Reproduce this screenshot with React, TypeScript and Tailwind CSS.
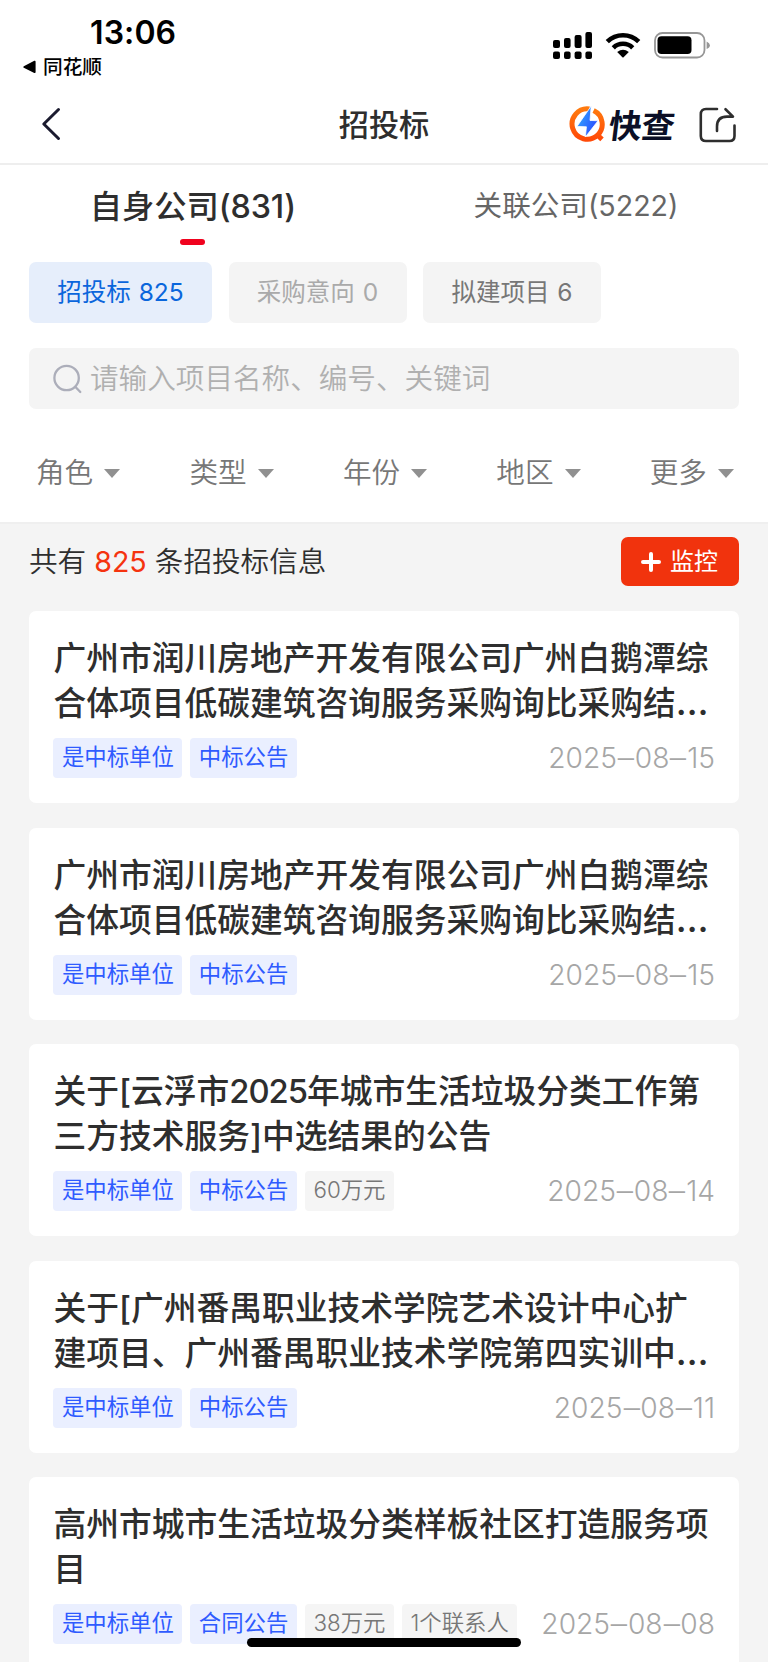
import React from "react";

type Tag = { text: string; tone: "blue" | "gray" };
type Bid = { lines: string[]; tags: Tag[]; date: string };

const win: Tag = { text: "是中标单位", tone: "blue" };
const notice: Tag = { text: "中标公告", tone: "blue" };

const bids: Bid[] = [
  {
    lines: ["广州市润川房地产开发有限公司广州白鹅潭综", "合体项目低碳建筑咨询服务采购询比采购结…"],
    tags: [win, notice],
    date: "2025-08-15",
  },
  {
    lines: ["广州市润川房地产开发有限公司广州白鹅潭综", "合体项目低碳建筑咨询服务采购询比采购结…"],
    tags: [win, notice],
    date: "2025-08-15",
  },
  {
    lines: ["关于[云浮市2025年城市生活垃圾分类工作第", "三方技术服务]中选结果的公告"],
    tags: [win, notice, { text: "60万元", tone: "gray" }],
    date: "2025-08-14",
  },
  {
    lines: ["关于[广州番禺职业技术学院艺术设计中心扩", "建项目、广州番禺职业技术学院第四实训中…"],
    tags: [win, notice],
    date: "2025-08-11",
  },
  {
    lines: ["高州市城市生活垃圾分类样板社区打造服务项", "目"],
    tags: [
      win,
      { text: "合同公告", tone: "blue" },
      { text: "38万元", tone: "gray" },
      { text: "1个联系人", tone: "gray" },
    ],
    date: "2025-08-08",
  },
];

const filters = ["角色", "类型", "年份", "地区", "更多"];

function StatusBar() {
  return (
    <div className="flex h-[84px] justify-between text-black">
      <div className="pt-[14px]">
        <div className="pl-[90px] text-[32px] leading-[38px] font-semibold tracking-[0.1px]">13:06</div>
        <div className="flex items-center pt-[1px] pl-[23px] text-[19.7px] leading-[28px] font-medium">
          <svg className="mr-[7px] h-[14px] w-[13px]" viewBox="0 0 13 14">
            <path d="M0.8 6.2 L11.3 0.8 Q12.6 0.3 12.6 1.8 V12 Q12.6 13.6 11.3 12.9 L0.8 7.8 Q-0.2 7 0.8 6.2Z" />
          </svg>
          同花顺
        </div>
      </div>
      <div className="flex items-start pt-[32px] pr-[58px]">
        <svg className="h-[28px] w-[40px]" viewBox="0 0 40 28">
          <rect x="1" y="8" width="7" height="8" rx="2" />
          <rect x="12" y="6" width="6.6" height="10" rx="2" />
          <rect x="22.6" y="3" width="7" height="13" rx="2" />
          <rect x="33.4" y="0" width="6.6" height="16" rx="2" />
          <rect x="1" y="19.6" width="7" height="7.4" rx="2" />
          <rect x="12" y="19.6" width="6.6" height="7.4" rx="2" />
          <rect x="22.6" y="19.6" width="7" height="7.4" rx="2" />
          <rect x="33.4" y="19.6" width="6.6" height="7.4" rx="2" />
        </svg>
        <svg className="ml-[13px] h-[26px] w-[36px]" viewBox="0 0 36 26" fill="none" stroke="#000" strokeWidth="4.6">
          <path d="M2.3 9.6 A22.4 22.4 0 0 1 33.7 9.6" />
          <path d="M8.3 15.8 A13.8 13.8 0 0 1 27.7 15.8" />
          <path d="M12.2 20 Q18 15.6 23.8 20 L18.6 25.2 Q18 25.7 17.4 25.2Z" fill="#000" stroke="none" />
        </svg>
        <svg className="ml-[13px] h-[28px] w-[56px]" viewBox="0 0 56 28">
          <rect x="1" y="1" width="49.5" height="24.5" rx="7.5" fill="none" stroke="#969696" strokeWidth="1.8" />
          <rect x="3.5" y="4.3" width="34" height="17.8" rx="4" />
          <path d="M52.6 9.5 Q55.9 11 55.9 13.3 Q55.9 15.8 52.6 17Z" fill="#969696" />
        </svg>
      </div>
    </div>
  );
}

function Logo() {
  return (
    <div className="flex items-center">
      <svg className="h-[37px] w-[36px]" viewBox="0 0 36 37">
        <defs>
          <linearGradient id="ring" x1="0" y1="0" x2="0" y2="1">
            <stop offset="0" stopColor="#ff7a0f" />
            <stop offset="1" stopColor="#ff4a08" />
          </linearGradient>
          <linearGradient id="bolt" x1="0" y1="0" x2="1" y2="0.6">
            <stop offset="0" stopColor="#33b6ff" />
            <stop offset="1" stopColor="#2b4bff" />
          </linearGradient>
        </defs>
        <path
          d="M20.5 3 A15.2 15.2 0 1 0 28.6 29.2 L33 33.4 M28.6 29.2 A15.2 15.2 0 0 0 24.6 4.6"
          fill="none"
          stroke="url(#ring)"
          strokeWidth="5"
        />
        <path d="M22.2 0 L21 14.4 L29 14.8 L16.4 31 L17.4 20.8 L8 20.4Z" fill="url(#bolt)" stroke="#fff" strokeWidth="0.8" />
      </svg>
      <span className="mt-[2px] ml-[4px] inline-block -skew-x-[7deg] text-[33px] leading-[40px] font-bold tracking-[-0.4px] text-[#0b0f26]">
        快查
      </span>
    </div>
  );
}

function Header() {
  return (
    <div className="grid h-[81px] grid-cols-3 items-center border-b-2 border-[#eeeeee] px-[32px]">
      <svg className="ml-[9px] h-[34px] w-[20px]" viewBox="0 0 20 34" fill="none" stroke="#1b1b2f" strokeWidth="3" strokeLinecap="round" strokeLinejoin="round">
        <path d="M17.5 2.5 L2.8 17 L17.5 31.5" />
      </svg>
      <div className="pt-[2px] text-center text-[30.2px] leading-[40px] font-medium text-[#2e2e2e]">招投标</div>
      <div className="flex items-center justify-end pt-[2px]">
        <Logo />
        <svg className="ml-[25px] h-[36px] w-[37px]" viewBox="0 0 37 36" fill="none" stroke="#2e2e2e" strokeWidth="2.6" strokeLinecap="round" strokeLinejoin="round">
          <path d="M18 2 H7 Q1.8 2 1.8 7.2 V29 Q1.8 34 7 34 H30.5 Q35.5 34 35.5 29 V18.5" />
          <path d="M18 24 V19.5 Q18 9.6 28 9.6 H34 L26.5 2.2" />
        </svg>
      </div>
    </div>
  );
}

function Tabs() {
  return (
    <div className="grid h-[97px] grid-cols-2 text-center">
      <div className="flex flex-col items-center pt-[18px]">
        <div className="pt-[1px] pl-[2px] text-[32.3px] leading-[46px] font-medium tracking-[-0.1px] whitespace-nowrap text-[#2e2e2e]">
          自身公司(831)
        </div>
        <div className="mt-[9px] h-[6px] w-[25px] rounded-[3px] bg-[#f0021e]" />
      </div>
      <div className="pt-[18px] text-[28.6px] leading-[46px] whitespace-nowrap text-[#666666]">关联公司(5222)</div>
    </div>
  );
}

function Chips() {
  return (
    <div className="flex h-[61px] gap-[16.5px] px-[29px] text-[24.5px] leading-[61px] whitespace-nowrap">
      <div className="w-[183px] rounded-[7px] bg-[#e6eefb] text-center text-[#0a66dc] [word-spacing:1px]">招投标 825</div>
      <div className="w-[178px] rounded-[7px] bg-[#f4f4f4] text-center text-[#aaaaaa] [word-spacing:1px]">采购意向 0</div>
      <div className="w-[178px] rounded-[7px] bg-[#f4f4f4] text-center text-[#777777] [word-spacing:1px]">拟建项目 6</div>
    </div>
  );
}

function Search() {
  return (
    <div className="mx-[29px] mt-[25px] flex h-[61px] items-center rounded-[7px] bg-[#f4f4f4] pl-[24px]">
      <svg className="mr-[8px] h-[30px] w-[29px]" viewBox="0 0 29 30" fill="none" stroke="#acaeba" strokeWidth="2.3" strokeLinecap="round">
        <circle cx="13.6" cy="14" r="12.2" />
        <path d="M22.5 23 L27.3 28" />
      </svg>
      <span className="text-[28.6px] leading-[60px] font-[350] text-[#b0b0b0]">请输入项目名称、编号、关键词</span>
    </div>
  );
}

function Filters() {
  return (
    <div className="flex h-[113px] justify-between pt-[34px] pr-[34px] pl-[36px]">
      {filters.map((name) => (
        <div key={name} className="flex h-[60px] items-center text-[28.6px] leading-[60px] font-[350] text-[#777777]">
          {name}
          <svg className="ml-[11px] h-[9px] w-[16px]" viewBox="0 0 16 9" fill="#909090">
            <path d="M0 0 H16 L8 9Z" />
          </svg>
        </div>
      ))}
    </div>
  );
}

function Summary() {
  return (
    <div className="flex h-[89px] items-start justify-between px-[29px] pt-[15px]">
      <div className="text-[28.6px] leading-[49px] font-[350] whitespace-pre text-[#2e2e2e]">
        共有 <span className="font-normal text-[#f5330f]">825</span> 条招投标信息
      </div>
      <div className="flex h-[49px] w-[118px] items-center rounded-[7px] bg-[#f1330d] pl-[20px] text-[24px] leading-[48px] text-white">
        <svg className="mr-[9px] h-[20px] w-[20px]" viewBox="0 0 20 20" fill="none" stroke="#fff" strokeWidth="4" strokeLinecap="round">
          <path d="M10 2 V18 M2 10 H18" />
        </svg>
        监控
      </div>
    </div>
  );
}

function DateText({ value }: { value: string }) {
  const [y, m, d] = value.split("-");
  const dash = <span className="inline-block w-[17.8px] scale-x-[1.9] text-center">-</span>;
  return (
    <div className="ml-auto text-[28.2px] leading-[40px] font-light whitespace-nowrap text-[#a6a6a6]">
      {y}
      {dash}
      {m}
      {dash}
      {d}
    </div>
  );
}

function TitleLine({ text }: { text: string }) {
  return (
    <div className="h-[45px]">
      {text.split(/(\d+|…)/).map((part, i) => {
        if (/^\d/.test(part)) {
          return (
            <span key={i} className="tracking-[-1px]">
              {part}
            </span>
          );
        }
        if (part === "…") {
          return (
            <span key={i} className="text-[36px] leading-[0]">
              {part}
            </span>
          );
        }
        return part;
      })}
    </div>
  );
}

function Card({ bid }: { bid: Bid }) {
  return (
    <div className="h-[192px] shrink-0 rounded-[7px] bg-white pt-[25px] pr-[24px] pl-[24.4px]">
      <div className="text-[32.75px] leading-[45px] font-medium whitespace-nowrap text-[#2e2e2e]">
        {bid.lines.map((line, i) => (
          <TitleLine key={i} text={line} />
        ))}
      </div>
      <div className="mt-[12px] flex gap-[8px]">
        {bid.tags.map((tag) => (
          <div
            key={tag.text}
            className={
              tag.tone === "blue"
                ? "h-[40px] rounded-[4px] bg-[#eaefff] px-[8.5px] text-[22.4px] leading-[38px] whitespace-nowrap text-[#2f5bff]"
                : "h-[40px] rounded-[4px] bg-[#f5f5f5] px-[8.5px] text-[22.4px] leading-[38px] font-[350] whitespace-nowrap text-[#777777]"
            }
          >
            {tag.text}
          </div>
        ))}
        <DateText value={bid.date} />
      </div>
    </div>
  );
}

export default function App() {
  return (
    <div className="relative flex h-[1662px] w-[768px] flex-col overflow-hidden bg-white font-['Inter','Noto_Sans_CJK_SC',sans-serif]">
      <StatusBar />
      <Header />
      <Tabs />
      <Chips />
      <Search />
      <Filters />
      <div className="min-h-0 flex-1 border-t-2 border-[#efefef] bg-[#f4f4f4]">
        <div className="-mt-[2px]">
          <Summary />
          <div className="flex flex-col gap-[24.6px] px-[29px]">
            {bids.map((bid, i) => (
              <Card key={i} bid={bid} />
            ))}
          </div>
        </div>
      </div>
      <div className="absolute bottom-[15px] left-[247px] h-[9px] w-[274px] rounded-full bg-black" />
    </div>
  );
}
